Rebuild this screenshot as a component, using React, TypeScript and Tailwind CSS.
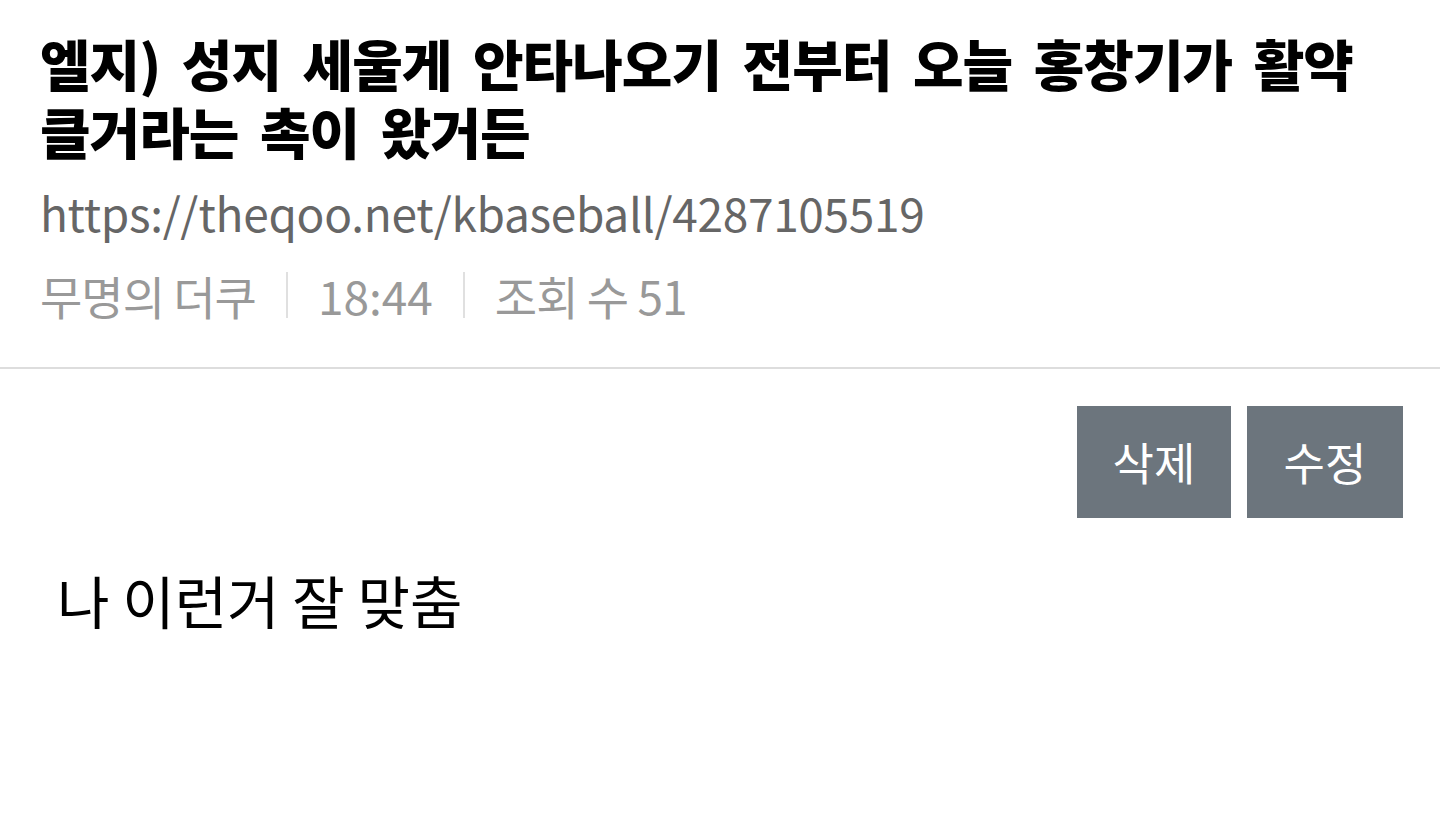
export default function App() {
  const font = { fontFamily: '"Noto Sans CJK KR", "Noto Sans", sans-serif' };
  return (
    <div className="w-[1440px] h-[814px] bg-white overflow-hidden" style={font}>
      <header className="px-[40px] pt-[28px]">
        <h1 className="text-[55px] leading-[68px] font-extrabold text-black tracking-[-1px] [word-spacing:10px]">
          엘지) 성지 세울게 안타나오기 전부터 오늘 홍창기가 활약 클거라는 촉이 왔거든
        </h1>
        <div className="mt-[18px] text-[46px] leading-[60px] text-[#666666] tracking-[-0.3px]">
          https://theqoo.net/kbaseball/4287105519
        </div>
        <div className="mt-[23px] flex items-center text-[46px] leading-[60px] text-[#999999] tracking-[-1px]">
          <span>무명의 더쿠</span>
          <span className="mx-[30px] h-[46px] w-[2px] bg-[#e0e0e0]" />
          <span className="tracking-[0px]">18:44</span>
          <span className="mx-[30px] h-[46px] w-[2px] bg-[#e0e0e0]" />
          <span>조회 수 51</span>
        </div>
      </header>
      <div className="mt-[42px] h-[2px] bg-[#dddddd]" />
      <div className="flex justify-end gap-[16px] pr-[37px] pt-[37px]">
        <button className="w-[154px] h-[112px] bg-[#6c757d] text-white text-[45px] flex items-center justify-center">
          삭제
        </button>
        <button className="w-[156px] h-[112px] bg-[#6c757d] text-white text-[45px] flex items-center justify-center">
          수정
        </button>
      </div>
      <p className="mt-[46px] pl-[57px] text-[57px] leading-[70px] text-black">
        나 이런거 잘 맞춤
      </p>
    </div>
  );
}
